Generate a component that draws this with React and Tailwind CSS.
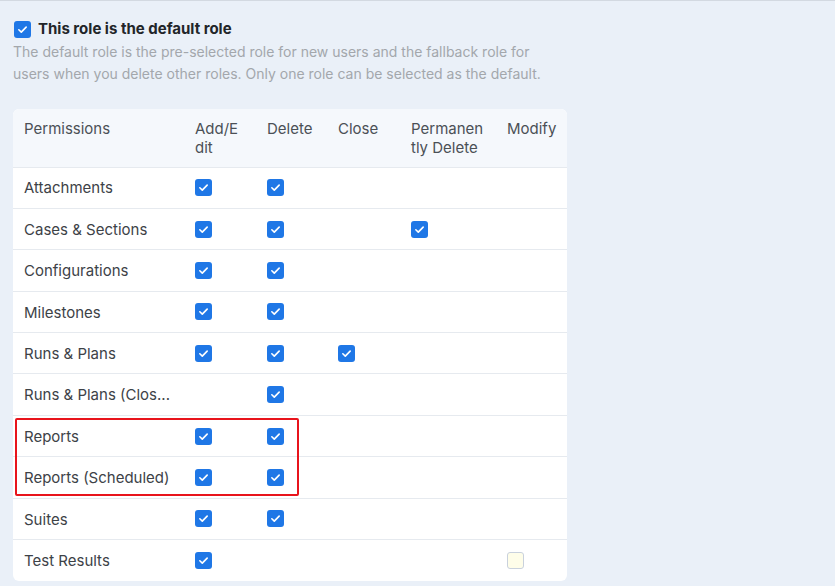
import React from "react"

const rows = [
  { name: "Attachments", add: true, del: true },
  { name: "Cases & Sections", add: true, del: true, perm: true },
  { name: "Configurations", add: true, del: true },
  { name: "Milestones", add: true, del: true },
  { name: "Runs & Plans", add: true, del: true, close: true },
  { name: "Runs & Plans (Clos...", del: true },
  { name: "Reports", add: true, del: true },
  { name: "Reports (Scheduled)", add: true, del: true },
  { name: "Suites", add: true, del: true },
  { name: "Test Results", add: true, modify: "empty" },
]

const headers = [
  { label: "Permissions", cls: "pr-[8px]" },
  { label: "Add/Edit", cls: "pr-[14px] break-all" },
  { label: "Delete", cls: "pr-[8px] break-all" },
  { label: "Close", cls: "pr-[8px] break-all" },
  { label: "Permanently Delete", cls: "pr-[8px] break-all" },
  { label: "Modify", cls: "pr-[4px] break-all" },
]

function Check({ checked = true }) {
  if (!checked) {
    return <span className="block w-[17px] h-[17px] rounded-[3px] border border-[#c9d1dd] bg-[#fefde9]" />
  }
  return (
    <span className="flex items-center justify-center w-[17px] h-[17px] rounded-[3px] bg-[#1f77e6]">
      <svg viewBox="0 0 16 16" className="w-[13px] h-[13px]" fill="none">
        <path d="M3.5 8.3l3 2.9 6-6.2" stroke="white" strokeWidth="2" strokeLinecap="round" strokeLinejoin="round" />
      </svg>
    </span>
  )
}

function Cell({ value }) {
  return (
    <td className="pl-[11px] align-middle">
      {value === true && <Check />}
      {value === "empty" && <Check checked={false} />}
    </td>
  )
}

export default function App() {
  return (
    <div
      className="min-h-screen bg-[#eaf0f8] border-t border-[#d3d9e1] pl-[13px] pt-[19px] text-[#3d4247]"
      style={{ fontFamily: "Inter, 'Noto Sans', sans-serif" }}
    >
      <div className="flex items-center gap-[7px] pl-px">
        <Check />
        <span className="text-[15px] font-bold text-[#222529] leading-[18px]">This role is the default role</span>
      </div>
      <p className="mt-[3px] w-[545px] text-[14px] leading-[22px] text-[#a3a7ac]">
        The default role is the pre-selected role for new users and the fallback role for users when you delete other roles. Only one role can be selected as the default.
      </p>

      <div className="relative mt-[24px] w-[554px] bg-white rounded-[6px] overflow-hidden">
        <table className="w-full table-fixed border-collapse text-[15px]">
          <colgroup>
            <col className="w-[171px]" />
            <col className="w-[72px]" />
            <col className="w-[71px]" />
            <col className="w-[73px]" />
            <col className="w-[96px]" />
            <col className="w-[71px]" />
          </colgroup>
          <thead>
            <tr className="bg-[#f5f8fc] h-[58px] text-[#4b5056]">
              {headers.map((h) => (
                <th
                  key={h.label}
                  className={`pl-[11px] pt-[10px] align-top text-left font-normal leading-[19px] ${h.cls}`}
                >
                  {h.label}
                </th>
              ))}
            </tr>
          </thead>
          <tbody>
            {rows.map((r) => (
              <tr key={r.name} className="h-[41.4px] border-t border-[#e6eaef]">
                <td className="pl-[11px] pt-[2px] align-middle whitespace-nowrap">{r.name}</td>
                <Cell value={r.add} />
                <Cell value={r.del} />
                <Cell value={r.close} />
                <Cell value={r.perm} />
                <Cell value={r.modify} />
              </tr>
            ))}
          </tbody>
        </table>
        <div className="absolute left-[2px] top-[309px] w-[284px] h-[78px] border-2 border-[#e8141c] rounded-[2px] pointer-events-none" />
      </div>
    </div>
  )
}
